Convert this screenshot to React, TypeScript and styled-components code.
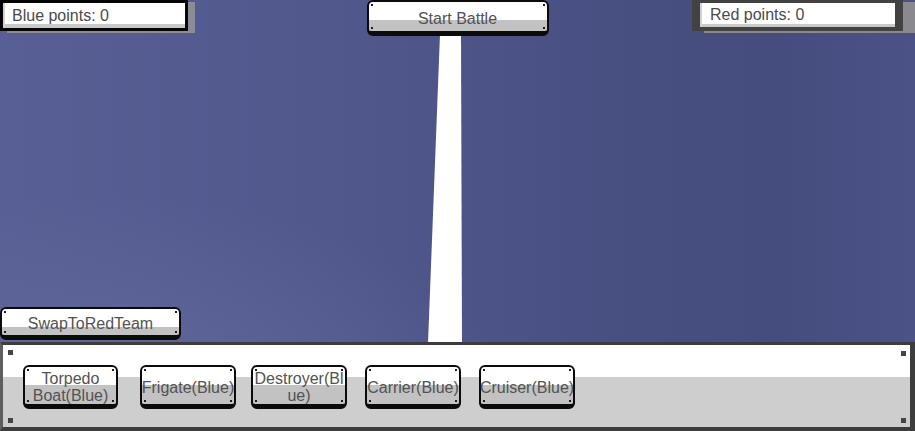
import React from "react";
import styled, { createGlobalStyle } from "styled-components";

const GlobalStyle = createGlobalStyle`
  html, body {
    margin: 0;
    padding: 0;
    overflow: hidden;
  }
  body {
    font-family: "Liberation Sans", Arial, sans-serif;
  }
  #root {
    width: 100vw;
    height: 100vh;
  }
`;

const Screen = styled.div`
  position: relative;
  width: 100%;
  height: 100%;
  display: flex;
  flex-direction: column;
  overflow: hidden;
  background:
    radial-gradient(ellipse 45% 55% at 12% 100%, rgba(104, 112, 160, 0.7) 0%, rgba(104, 112, 160, 0) 100%),
    linear-gradient(90deg, #585f94 0%, #50578b 40%, #474e80 70%, #454c7e 85%, #4b5285 100%);
`;

const Beam = styled.svg`
  position: absolute;
  left: 0;
  top: 0;
  width: 100%;
  height: 100%;
  pointer-events: none;
`;

const TopBar = styled.div`
  position: relative;
  z-index: 1;
  display: grid;
  grid-template-columns: 1fr auto 1fr;
  align-items: start;
  height: 36px;
`;

const Label = styled.span`
  font-size: 16px;
  color: #4a4a4a;
  white-space: nowrap;
`;

const BluePanel = styled.div`
  justify-self: start;
  box-sizing: border-box;
  width: 188px;
  height: 31px;
  border: 3px solid #050505;
  box-shadow: 7px 2px 0 #8b8c94;
  display: flex;
`;

const PanelFace = styled.div<{ $pad: number }>`
  flex: 1;
  display: flex;
  align-items: center;
  padding-left: ${(p) => p.$pad}px;
  background: linear-gradient(#ffffff 0 21px, #c9c9c9 21px);
  box-shadow: inset 2px 0 0 #d2d2d2;
`;

const RedPanel = styled.div`
  justify-self: end;
  margin-right: 12px;
  box-sizing: border-box;
  width: 211px;
  height: 31px;
  padding: 3px 8px 4px 8px;
  background: #424242;
  box-shadow: 12px 2px 0 #8a8a8e;
  display: flex;
`;

const PixelButton = styled.button<{ $w: number; $h: number; $gap?: number }>`
  box-sizing: border-box;
  width: ${(p) => p.$w}px;
  height: ${(p) => p.$h}px;
  margin: 0 0 0 ${(p) => p.$gap ?? 0}px;
  padding: 3px 0 0;
  flex: none;
  border: 2px solid #0b0b0b;
  border-bottom-width: 5px;
  border-radius: 6px;
  background:
    linear-gradient(#1c1c1c, #1c1c1c) left 2px top 2px / 2px 2px no-repeat,
    linear-gradient(#1c1c1c, #1c1c1c) right 2px top 2px / 2px 2px no-repeat,
    linear-gradient(#1c1c1c, #1c1c1c) left 2px bottom 2px / 2px 2px no-repeat,
    linear-gradient(#1c1c1c, #1c1c1c) right 2px bottom 2px / 2px 2px no-repeat,
    linear-gradient(#ffffff 0 18px, #c2c2c2 18px);
  font-family: "Liberation Sans", Arial, sans-serif;
  font-size: 16px;
  line-height: 17px;
  color: #535353;
  display: flex;
  align-items: center;
  justify-content: center;
  cursor: pointer;
`;

/* caption may run right up to the outline, as the game UI text does */
const Caption = styled.span<{ $w: number }>`
  flex: none;
  width: ${(p) => p.$w}px;
  text-align: center;
  overflow-wrap: anywhere;
`;

const StartButton = styled(PixelButton)`
  justify-self: center;
`;

const Spacer = styled.div`
  flex: 1;
`;

const SwapRow = styled.div`
  position: relative;
  z-index: 1;
  display: flex;
  margin-bottom: 2px;
`;

const ShipPanel = styled.div`
  position: relative;
  z-index: 1;
  box-sizing: border-box;
  height: 89px;
  border-style: solid;
  border-color: #3d3d3d #3d3d3d #3d3d3d #5e5e5e;
  border-width: 3px 5px 4px 3px;
  padding: 20px 0 0 20px;
  display: flex;
  align-items: flex-start;
  background:
    linear-gradient(#454545, #454545) left 5px top 5px / 5px 5px no-repeat,
    linear-gradient(#454545, #454545) right 4px top 6px / 5px 5px no-repeat,
    linear-gradient(#454545, #454545) left 5px bottom 4px / 5px 5px no-repeat,
    linear-gradient(#454545, #454545) right 4px bottom 4px / 5px 5px no-repeat,
    linear-gradient(#ffffff 0 32px, #cecece 32px);
`;

const ships = [
  { name: "Torpedo Boat(Blue)", width: 95, gap: 0 },
  { name: "Frigate(Blue)", width: 96, gap: 22 },
  { name: "Destroyer(Blue)", width: 96, gap: 15 },
  { name: "Carrier(Blue)", width: 96, gap: 18 },
  { name: "Cruiser(Blue)", width: 96, gap: 18 },
];

export default function App() {
  return (
    <>
      <GlobalStyle />
      <Screen>
        <Beam viewBox="0 0 915 431" preserveAspectRatio="none">
          <polygon points="440,34 461,34 462,343 428,343" fill="#ffffff" />
        </Beam>
        <TopBar>
          <BluePanel>
            <PanelFace $pad={9}>
              <Label>Blue points: 0</Label>
            </PanelFace>
          </BluePanel>
          <StartButton $w={182} $h={36}>
            <Caption $w={178}>Start Battle</Caption>
          </StartButton>
          <RedPanel>
            <PanelFace $pad={10}>
              <Label>Red points: 0</Label>
            </PanelFace>
          </RedPanel>
        </TopBar>
        <Spacer />
        <SwapRow>
          <PixelButton $w={181} $h={33}>
            <Caption $w={177}>SwapToRedTeam</Caption>
          </PixelButton>
        </SwapRow>
        <ShipPanel>
          {ships.map((s) => (
            <PixelButton key={s.name} $w={s.width} $h={44} $gap={s.gap}>
              <Caption $w={s.width}>{s.name}</Caption>
            </PixelButton>
          ))}
        </ShipPanel>
      </Screen>
    </>
  );
}
